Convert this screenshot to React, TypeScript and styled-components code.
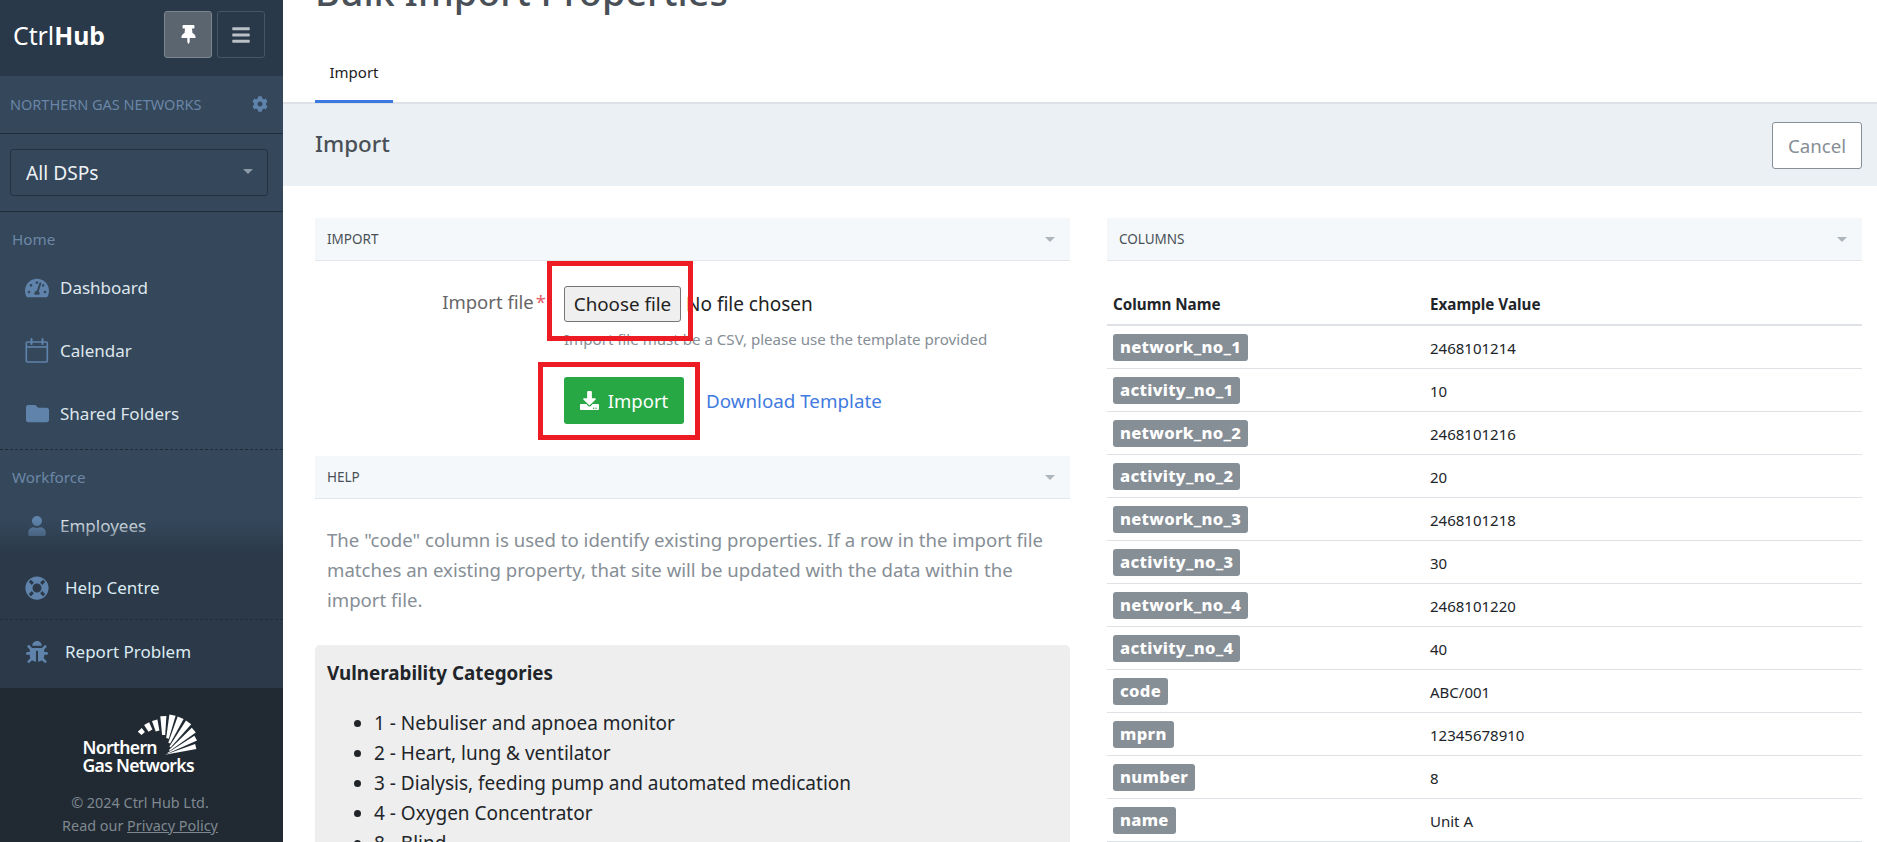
import React from 'react';
import styled, { createGlobalStyle } from 'styled-components';
import {
  FaBars,
  FaBug,
  FaCog,
  FaDownload,
  FaFolder,
  FaLifeRing,
  FaTachometerAlt,
  FaThumbtack,
  FaUser,
} from 'react-icons/fa';

const columns = [
  ['network_no_1', '2468101214'],
  ['activity_no_1', '10'],
  ['network_no_2', '2468101216'],
  ['activity_no_2', '20'],
  ['network_no_3', '2468101218'],
  ['activity_no_3', '30'],
  ['network_no_4', '2468101220'],
  ['activity_no_4', '40'],
  ['code', 'ABC/001'],
  ['mprn', '12345678910'],
  ['number', '8'],
  ['name', 'Unit A'],
];

const categories = [
  '1 - Nebuliser and apnoea monitor',
  '2 - Heart, lung & ventilator',
  '3 - Dialysis, feeding pump and automated medication',
  '4 - Oxygen Concentrator',
  '8 - Blind',
];

// angle from vertical, inner radius, outer radius of each ray of the logo
const rays = [
  [-44, 30, 35],
  [-29, 28, 36],
  [-15, 25, 36],
  [-1, 20, 39],
  [12, 17, 41],
  [24, 13, 41],
  [37, 10, 41],
  [50, 7, 39],
  [62, 4, 36],
  [75, 1, 33],
];

const rayPoints = (angle: number, inner: number, outer: number) => {
  const at = (a: number, r: number) => {
    const rad = (a * Math.PI) / 180;
    return `${(40 + r * Math.sin(rad)).toFixed(1)},${(44 - r * Math.cos(rad)).toFixed(1)}`;
  };
  return [at(angle - 4.5, inner), at(angle + 4.5, inner), at(angle + 4.5, outer), at(angle - 4.5, outer)].join(' ');
};

const CalendarIcon = () => (
  <svg width="24" height="25" viewBox="0 0 24 25" fill="none" stroke="currentColor" strokeWidth="1.6">
    <rect x="1.3" y="4" width="21" height="20" rx="1" />
    <path d="M1.3 9h21" />
    <path d="M6.5 1v5M17.5 1v5" strokeLinecap="round" strokeWidth="2" />
  </svg>
);

const App = () => {
  return (
    <>
      <GlobalStyle />
      <Page>
        <Sidebar>
          <Brand>
            <BrandName>
              Ctrl<b>Hub</b>
            </BrandName>
            <BrandButtons>
              <BrandButton $active>
                <FaThumbtack size={19} />
              </BrandButton>
              <BrandButton>
                <FaBars size={20} />
              </BrandButton>
            </BrandButtons>
          </Brand>
          <OrgRow>
            <OrgName>NORTHERN GAS NETWORKS</OrgName>
            <FaCog size={16} />
          </OrgRow>
          <SelectRow>
            <DspSelect>
              All DSPs
              <SelectCaret />
            </DspSelect>
          </SelectRow>
          <NavScroll>
            <NavLabel>Home</NavLabel>
            <NavItem>
              <NavIcon>
                <FaTachometerAlt size={24} />
              </NavIcon>
              Dashboard
            </NavItem>
            <NavItem>
              <NavIcon>
                <CalendarIcon />
              </NavIcon>
              Calendar
            </NavItem>
            <NavItem>
              <NavIcon>
                <FaFolder size={23} />
              </NavIcon>
              Shared Folders
            </NavItem>
            <NavDivider />
            <NavLabel>Workforce</NavLabel>
            <NavItem>
              <NavIcon>
                <FaUser size={20} />
              </NavIcon>
              Employees
            </NavItem>
          </NavScroll>
          <SupportNav>
            <SupportItem>
              <NavIcon>
                <FaLifeRing size={24} />
              </NavIcon>
              Help Centre
            </SupportItem>
            <SupportItem>
              <NavIcon>
                <FaBug size={22} />
              </NavIcon>
              Report Problem
            </SupportItem>
          </SupportNav>
          <SideFooter>
            <Logo>
              <LogoFan viewBox="0 0 80 50">
                {rays.map(([angle, inner, outer]) => (
                  <polygon key={angle} points={rayPoints(angle, inner, outer)} fill="#fff" />
                ))}
              </LogoFan>
              <LogoText>
                Northern
                <br />
                Gas Networks
              </LogoText>
            </Logo>
            <Copyright>© 2024 Ctrl Hub Ltd.</Copyright>
            <Copyright>
              Read our <u>Privacy Policy</u>
            </Copyright>
          </SideFooter>
        </Sidebar>
        <Main>
          <ScrolledContent>
            <PageTitle>Bulk Import Properties</PageTitle>
            <Tabs>
              <Tab>Import</Tab>
            </Tabs>
            <SectionBar>
              <SectionTitle>Import</SectionTitle>
              <CancelButton>Cancel</CancelButton>
            </SectionBar>
            <ContentGrid>
              <Column>
                <PanelHead>
                  IMPORT
                  <PanelCaret />
                </PanelHead>
                <FormRow>
                  <FormLabel>
                    Import file<Required>*</Required>
                  </FormLabel>
                  <div>
                    <FileField>
                      <FileButton>
                        Choose file
                        <FileHighlight />
                      </FileButton>
                      <FileStatus>No file chosen</FileStatus>
                    </FileField>
                    <FieldHint>Import file must be a CSV, please use the template provided</FieldHint>
                  </div>
                </FormRow>
                <ActionRow>
                  <ImportButton>
                    <FaDownload size={19} />
                    Import
                    <ImportHighlight />
                  </ImportButton>
                  <TemplateLink>Download Template</TemplateLink>
                </ActionRow>
                <PanelHead>
                  HELP
                  <PanelCaret />
                </PanelHead>
                <HelpText>
                  The "code" column is used to identify existing properties. If a row in the import file matches an
                  existing property, that site will be updated with the data within the import file.
                </HelpText>
                <InfoBox>
                  <InfoTitle>Vulnerability Categories</InfoTitle>
                  <InfoList>
                    {categories.map((item) => (
                      <li key={item}>{item}</li>
                    ))}
                  </InfoList>
                </InfoBox>
              </Column>
              <Column>
                <PanelHead>
                  COLUMNS
                  <PanelCaret />
                </PanelHead>
                <ColumnsTable>
                  <thead>
                    <tr>
                      <th>Column Name</th>
                      <th>Example Value</th>
                    </tr>
                  </thead>
                  <tbody>
                    {columns.map(([name, value]) => (
                      <tr key={name}>
                        <td>
                          <Badge>{name}</Badge>
                        </td>
                        <td>{value}</td>
                      </tr>
                    ))}
                  </tbody>
                </ColumnsTable>
              </Column>
            </ContentGrid>
          </ScrolledContent>
        </Main>
      </Page>
    </>
  );
};

const GlobalStyle = createGlobalStyle`
  html, body {
    margin: 0;
    height: 100%;
    overflow: hidden;
    background: #fff;
    font-family: "Noto Sans", "Open Sans", Arial, sans-serif;
  }
  #root {
    height: 100%;
  }
`;

const Page = styled.div`
  display: flex;
  height: 842px;
  overflow: hidden;
`;

const Sidebar = styled.aside`
  width: 283px;
  flex: none;
  display: flex;
  flex-direction: column;
  background: #34475b;
  color: #dfe6ec;
`;

const Brand = styled.div`
  height: 76px;
  flex: none;
  display: flex;
  align-items: center;
  justify-content: space-between;
  padding: 0 18px 0 13px;
  box-sizing: border-box;
  background: #2a3949;
`;

const BrandName = styled.div`
  font-size: 24.8px;
  color: #fff;
  margin-top: -6px;

  b {
    font-weight: 700;
  }
`;

const BrandButtons = styled.div`
  display: flex;
  gap: 5px;
  margin-top: -7px;
`;

const BrandButton = styled.button<{ $active?: boolean }>`
  width: 48px;
  height: 47px;
  padding: 0;
  display: flex;
  align-items: center;
  justify-content: center;
  border-radius: 3px;
  border: 1px solid ${(p) => (p.$active ? '#7d8791' : '#465564')};
  background: ${(p) => (p.$active ? '#5a6570' : 'transparent')};
  color: ${(p) => (p.$active ? '#fff' : '#b9c0c7')};
`;

const OrgRow = styled.div`
  height: 58px;
  flex: none;
  display: flex;
  align-items: center;
  justify-content: space-between;
  padding: 0 15px 2px 10px;
  box-sizing: border-box;
  border-bottom: 1px solid #1f2c3a;
  color: #5f83ab;
`;

const OrgName = styled.div`
  font-size: 14.5px;
  color: #6a86a6;
`;

const SelectRow = styled.div`
  height: 78px;
  flex: none;
  padding: 15px 15px 15px 10px;
  box-sizing: border-box;
  border-bottom: 1px solid #1f2c3a;
`;

const DspSelect = styled.div`
  position: relative;
  height: 47px;
  display: flex;
  align-items: center;
  padding-left: 15px;
  box-sizing: border-box;
  border: 1px solid #233140;
  border-radius: 3px;
  font-size: 19.2px;
  color: #eef2f5;
`;

const SelectCaret = styled.span`
  position: absolute;
  right: 14px;
  top: 19px;
  border-left: 5px solid transparent;
  border-right: 5px solid transparent;
  border-top: 5px solid #8c99a6;
`;

const NavScroll = styled.nav`
  position: relative;
  flex: 1;
  overflow: hidden;

  &::after {
    content: '';
    position: absolute;
    left: 0;
    right: 0;
    bottom: 0;
    height: 36px;
    background: linear-gradient(rgba(43, 57, 73, 0), #2b3949);
  }
`;

const NavLabel = styled.div`
  height: 32px;
  padding: 11px 0 0 12px;
  margin-bottom: 1px;
  font-size: 15.2px;
  line-height: 32px;
  color: #6d87a6;
`;

const NavItem = styled.div`
  height: 63px;
  display: flex;
  align-items: center;
  font-size: 17px;
  color: #dfe6ec;
`;

const NavIcon = styled.span`
  width: 24px;
  margin: 0 11px 0 25px;
  flex: none;
  display: flex;
  justify-content: center;
  color: #5f83ab;
`;

const NavDivider = styled.div`
  margin-top: 4px;
  border-top: 1px dashed #1f2c3a;
`;

const SupportNav = styled.div`
  flex: none;
  padding-bottom: 5px;
  background: #2b3949;
`;

const SupportItem = styled(NavItem)`
  color: #dcebf2;

  & + & {
    border-top: 1px dashed #1f2c3a;
  }

  ${NavIcon} {
    margin-right: 16px;
  }
`;

const SideFooter = styled.div`
  height: 154px;
  flex: none;
  padding: 24px 3px 0 0;
  box-sizing: border-box;
  background: #212a33;
  text-align: center;
`;

const Logo = styled.div`
  position: relative;
  width: 113px;
  height: 62px;
  margin: 0 auto 17px;
  color: #fff;
  text-align: left;
`;

const LogoFan = styled.svg`
  position: absolute;
  left: 40px;
  top: -1px;
  width: 80px;
  height: 50px;
`;

const LogoText = styled.div`
  position: absolute;
  left: -1px;
  bottom: 0;
  font-size: 17.6px;
  font-weight: 600;
  line-height: 18px;
  letter-spacing: -0.7px;
  white-space: nowrap;
`;

const Copyright = styled.div`
  font-size: 14.4px;
  line-height: 23px;
  color: #7f8890;
`;

const Main = styled.main`
  flex: 1;
  min-width: 0;
  overflow: hidden;
`;

const ScrolledContent = styled.div`
  margin-top: -33px;
`;

const PageTitle = styled.h1`
  margin: 0;
  height: 77px;
  padding-left: 32px;
  font-size: 37.8px;
  font-weight: 500;
  line-height: 50px;
  color: #495057;
`;

const Tabs = styled.div`
  height: 58px;
  display: flex;
  align-items: flex-end;
  padding-left: 32px;
  border-bottom: 2px solid #dee2e6;
`;

const Tab = styled.div`
  width: 78px;
  height: 58px;
  margin-bottom: -1px;
  box-sizing: border-box;
  padding-top: 15px;
  text-align: center;
  font-size: 15px;
  line-height: 24px;
  color: #222;
  border-bottom: 3px solid #3b7ae0;
`;

const SectionBar = styled.div`
  height: 82px;
  display: flex;
  align-items: center;
  justify-content: space-between;
  padding: 0 15px 0 32px;
  background: #ebf0f4;
`;

const SectionTitle = styled.h2`
  margin: -3px 0 0;
  font-size: 22.4px;
  font-weight: 500;
  color: #495057;
`;

const CancelButton = styled.button`
  width: 90px;
  height: 47px;
  border: 1px solid #868e96;
  border-radius: 3px;
  background: #fff;
  font: inherit;
  font-size: 18.7px;
  color: #868e96;
  padding: 0;
`;

const ContentGrid = styled.div`
  display: grid;
  grid-template-columns: 1fr 1fr;
  gap: 37px;
  padding: 32px 15px 0 32px;
`;

const Column = styled.section`
  min-width: 0;
`;

const PanelHead = styled.div`
  position: relative;
  height: 43px;
  display: flex;
  align-items: center;
  padding-left: 12px;
  box-sizing: border-box;
  background: #f5f8fa;
  border-bottom: 1px solid #e3e7eb;
  font-size: 13.5px;
  color: #495057;
`;

const PanelCaret = styled.span`
  position: absolute;
  right: 15px;
  top: 19px;
  border-left: 5px solid transparent;
  border-right: 5px solid transparent;
  border-top: 5px solid #adb5bd;
`;

const FormRow = styled.div`
  display: grid;
  grid-template-columns: 231px 1fr;
  column-gap: 18px;
  padding-top: 25px;
`;

const FormLabel = styled.label`
  font-size: 18.5px;
  line-height: 32px;
  text-align: right;
  color: #666;
`;

const Required = styled.span`
  margin-left: 2px;
  color: #e4606d;
`;

const FileField = styled.div`
  display: flex;
  align-items: center;
  gap: 5px;
`;

const FileButton = styled.div`
  position: relative;
  width: 117px;
  height: 36px;
  display: flex;
  align-items: center;
  justify-content: center;
  box-sizing: border-box;
  border: 1px solid #767676;
  border-radius: 3px;
  background: #efefef;
  font-size: 18.8px;
  white-space: nowrap;
  color: #222;
`;

const FileHighlight = styled.span`
  position: absolute;
  left: -18px;
  top: -26px;
  width: 146px;
  height: 80px;
  box-sizing: border-box;
  border: 5px solid #ed1c24;
`;

const FileStatus = styled.span`
  font-size: 19px;
  color: #222;
`;

const FieldHint = styled.div`
  margin-top: 7px;
  font-size: 15.1px;
  line-height: 21px;
  color: #868e96;
`;

const ActionRow = styled.div`
  display: flex;
  align-items: center;
  gap: 22px;
  height: 47px;
  margin-top: 27px;
  padding-left: 249px;
  margin-bottom: 32px;
`;

const ImportButton = styled.div`
  position: relative;
  width: 120px;
  height: 47px;
  display: flex;
  align-items: center;
  justify-content: center;
  gap: 9px;
  border-radius: 3px;
  background: #28a745;
  font-size: 18.5px;
  color: #fff;
`;

const ImportHighlight = styled.span`
  position: absolute;
  left: -26px;
  top: -15px;
  width: 162px;
  height: 78px;
  box-sizing: border-box;
  border: 5px solid #ed1c24;
`;

const TemplateLink = styled.a`
  font-size: 18.8px;
  color: #3f7be0;
`;

const HelpText = styled.p`
  margin: 26px 12px 30px;
  font-size: 18.6px;
  line-height: 30px;
  color: #868e96;
`;

const InfoBox = styled.div`
  padding: 13px 12px;
  border-radius: 5px;
  background: #eee;
  color: #212529;
`;

const InfoTitle = styled.h4`
  margin: 0 0 20px;
  font-size: 18.8px;
  font-weight: 700;
  line-height: 30px;
`;

const InfoList = styled.ul`
  margin: 0;
  padding-left: 47px;
  font-size: 19px;
  line-height: 30px;
`;

const ColumnsTable = styled.table`
  width: 100%;
  margin-top: 22px;
  border-collapse: collapse;
  table-layout: fixed;
  font-size: 15px;
  color: #212529;

  th {
    height: 41px;
    padding: 0 6px;
    text-align: left;
    font-size: 15.2px;
    font-weight: 700;
    border-bottom: 2px solid #dee2e6;
  }

  th:first-child {
    width: 317px;
    box-sizing: border-box;
  }

  td {
    height: 43px;
    box-sizing: border-box;
    padding: 2px 6px 0;
    border-bottom: 1px solid #dee2e6;
  }
`;

const Badge = styled.span`
  display: inline-block;
  height: 27px;
  padding: 0 7px;
  box-sizing: border-box;
  border-radius: 3px;
  background: #868e96;
  font-size: 16.6px;
  font-weight: 800;
  letter-spacing: 0.3px;
  line-height: 26px;
  color: #fff;
  vertical-align: middle;
`;

export default App;
